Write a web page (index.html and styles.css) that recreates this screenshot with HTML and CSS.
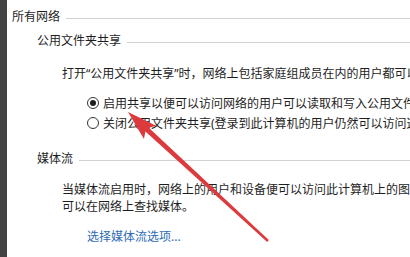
FILE: index.html
```html
<!DOCTYPE html>
<html lang="zh-CN">
<head>
<meta charset="utf-8">
<link rel="stylesheet" href="styles.css">
</head>
<body>
<div class="strip"></div>
<main class="panel">
  <div class="group-head top">
    <span class="head-text">所有网络</span><span class="rule"></span>
  </div>
  <div class="group-head sub">
    <span class="head-text">公用文件夹共享</span><span class="rule"></span>
  </div>
  <p class="desc first">打开“公用文件夹共享”时，网络上包括家庭组成员在内的用户都可以访问公用文件夹中的文件。</p>
  <div class="options">
    <label class="option"><span class="radio checked"></span><span class="opt-text">启用共享以便可以访问网络的用户可以读取和写入公用文件夹中的文件</span></label>
    <label class="option"><span class="radio"></span><span class="opt-text">关闭公用文件夹共享(登录到此计算机的用户仍然可以访问这些文件夹)</span></label>
  </div>
  <div class="group-head sub media">
    <span class="head-text">媒体流</span><span class="rule"></span>
  </div>
  <p class="desc media-desc">当媒体流启用时，网络上的用户和设备便可以访问此计算机上的图片、音乐以及视频。此计算机还<br>可以在网络上查找媒体。</p>
  <a class="link" href="#">选择媒体流选项...</a>
</main>
<svg class="arrow" width="410" height="257" viewBox="0 0 410 257">
  <polygon points="128,112 143.96,138.93 145.42,131.44 267.19,241.88 268.81,240.12 148.8,127.76 156.14,125.69" fill="#dc3a3d"/>
</svg>
</body>
</html>
```
FILE: styles.css
```css
html, body {
  margin: 0;
  padding: 0;
  width: 410px;
  height: 257px;
  overflow: hidden;
  background: #ffffff;
}
body {
  display: flex;
  position: relative;
  font-family: "Noto Sans", "Noto Sans CJK SC", sans-serif;
  font-size: 12px;
  color: #1e1e1e;
}
.strip {
  width: 7px;
  flex: none;
  background: #424242;
}
.panel {
  flex: 1;
  min-width: 0;
  padding: 5px 0 0 5px;
  display: flex;
  flex-direction: column;
  overflow: hidden;
}
.group-head {
  display: flex;
  align-items: center;
  height: 24px;
  line-height: 24px;
}
.group-head.sub {
  padding-left: 25px;
}
.group-head.media {
  margin-top: 14px;
}
.head-text {
  white-space: nowrap;
  flex: none;
}
.rule {
  flex: 1;
  height: 1px;
  background: #d2d2d2;
  margin-left: 6px;
  margin-top: 2px;
}
.desc {
  margin: 0;
  padding-left: 50px;
  white-space: nowrap;
}
.desc.first {
  margin-top: 12px;
  line-height: 18px;
}
.options {
  display: flex;
  flex-direction: column;
  margin-top: 10px;
  padding-left: 75px;
}
.option {
  display: flex;
  align-items: center;
  height: 20px;
  white-space: nowrap;
}
.radio {
  flex: none;
  width: 10px;
  height: 10px;
  border: 1px solid #333333;
  border-radius: 50%;
  background: #ffffff;
  display: flex;
  align-items: center;
  justify-content: center;
  margin-right: 4px;
}
.radio.checked::after {
  content: "";
  width: 6px;
  height: 6px;
  border-radius: 50%;
  background: #1e1e1e;
}
.media-desc {
  margin-top: 10px;
  line-height: 17px;
}
.link {
  margin-top: 13px;
  padding-left: 75px;
  line-height: 18px;
  color: #2f6bb5;
  text-decoration: none;
  white-space: nowrap;
}
.arrow {
  position: absolute;
  left: 0;
  top: 0;
  pointer-events: none;
}
```
